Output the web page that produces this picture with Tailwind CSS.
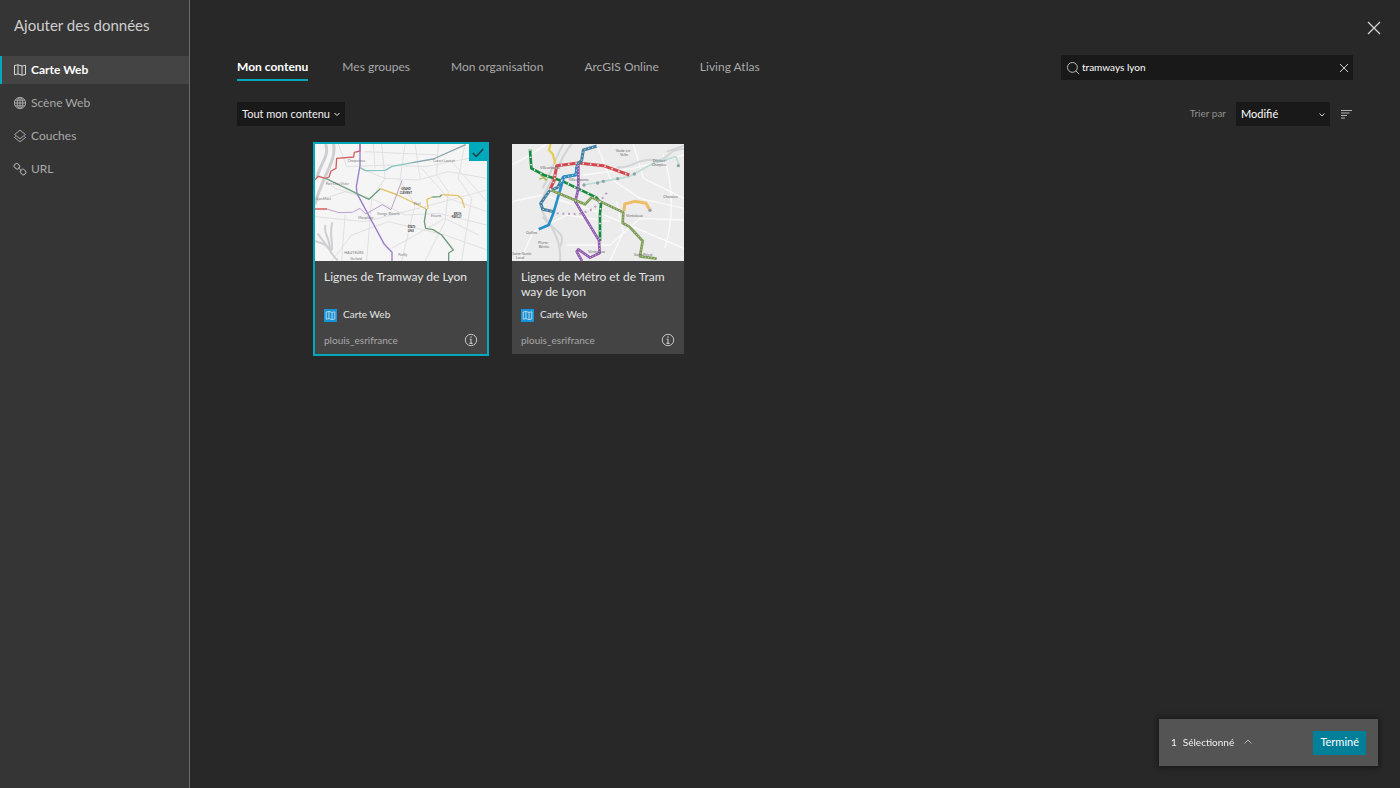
<!DOCTYPE html>
<html lang="fr">
  <head>
    <meta charset="UTF-8" />
    <meta name="viewport" content="width=device-width, initial-scale=1.0" />
    <title>Ajouter des données</title>
    <script src="https://cdn.jsdelivr.net/npm/@tailwindcss/browser@4"></script>
  </head>
  <body class="flex min-h-screen bg-[#282828] font-['Lato','Open_Sans',sans-serif] text-xs text-[#a9a9a9]">
    <!-- icons used more than once -->
    <svg class="hidden">
      <symbol id="icon-map" viewBox="0 0 14 14">
        <path d="M1.5 2.5C3 2.5 4 1.8 5 1.8S7.5 3 9 3 11.500 2.300 12.500 2.300L12.500 11.500C11.500 11.500 10.500 12.200 9 12.200S6.500 11 5 11 3 11.700 1.500 11.700ZM5 1.800V11M9 3V12.200" fill="none" stroke="currentColor" stroke-linejoin="round" />
      </symbol>
      <symbol id="icon-info" viewBox="0 0 14 14">
        <circle cx="7" cy="7" r="5.7" fill="none" stroke="currentColor" />
        <path d="M7 3.3v1.4M5.7 6.2H7v4M5.5 10.4h3" fill="none" stroke="currentColor" stroke-width="1.1" />
      </symbol>
    </svg>

    <!-- SIDEBAR -->
    <aside class="w-[190px] shrink-0 border-r border-[#6a6a6a] bg-[#353535]">
      <h1 class="px-3.5 pt-3.5 pb-5 text-[15px] leading-[22px] text-[#cfcfcf]">Ajouter des données</h1>
      <nav class="flex flex-col gap-[5px] text-xs">
        <a href="#carte" class="flex h-7 items-center gap-1 border-l-2 border-[#00a9bb] bg-[#444444] pl-[11px] font-bold text-white">
          <svg class="size-[14px] text-[#d8d8d8]"><use href="#icon-map" /></svg>
          Carte Web
        </a>
        <a href="#scene" class="flex h-7 items-center gap-1 pl-[13px]">
          <svg class="size-[14px]" viewBox="0 0 14 14" fill="none" stroke="currentColor">
            <circle cx="7" cy="7" r="5.6" />
            <ellipse cx="7" cy="7" rx="2.8" ry="5.6" />
            <path d="M7 1.4v11.2M1.4 7h11.2M2.2 4.2h9.6M2.2 9.8h9.6" />
          </svg>
          Scène Web
        </a>
        <a href="#couches" class="flex h-7 items-center gap-1 pl-[13px]">
          <svg class="size-[14px]" viewBox="0 0 14 14" fill="none" stroke="currentColor" stroke-linejoin="round">
            <path d="M7 1.2 12.4 5.5 7 9.8 1.600 5.500ZM2.600 7.400 1.400 8.400 7 12.800 12.600 8.400 11.400 7.400" />
          </svg>
          Couches
        </a>
        <a href="#url" class="flex h-7 items-center gap-1 pl-[13px]">
          <svg class="size-[14px]" viewBox="0 0 14 14" fill="none" stroke="currentColor">
            <rect x="1.2" y="2" width="5.4" height="4.6" rx="1.6" transform="rotate(45 3.9 4.3)" />
            <rect x="7.4" y="7.6" width="5.4" height="4.6" rx="1.6" transform="rotate(45 10.1 9.9)" />
            <path d="M5.3 5.6 8.6 8.8" />
          </svg>
          URL
        </a>
      </nav>
    </aside>

    <!-- MAIN -->
    <main class="relative flex-1 px-[47px] pt-[55px]">
      <button aria-label="Fermer" class="absolute top-5 right-[18px] text-[#d8d8d8]">
        <svg class="size-4" viewBox="0 0 16 16" fill="none" stroke="currentColor" stroke-width="1.2">
          <path d="M2 2 14 14M14 2 2 14" />
        </svg>
      </button>

      <div class="flex items-start justify-between">
        <nav class="flex gap-[41px] text-xs leading-6">
          <a href="#contenu" class="-mr-[7px] border-b-2 border-[#00a9bb] font-bold text-white">Mon contenu</a>
          <a href="#groupes">Mes groupes</a>
          <a href="#organisation">Mon organisation</a>
          <a href="#online">ArcGIS Online</a>
          <a href="#atlas">Living Atlas</a>
        </nav>
        <div class="flex h-[25px] w-[292px] items-center gap-0.5 bg-[#191919] px-[5px]">
          <svg class="size-[14px] shrink-0" viewBox="0 0 14 14" fill="none" stroke="#bdbdbd">
            <circle cx="6.4" cy="6.4" r="4.9" />
            <path d="M9.9 9.9 13.2 13.2" />
          </svg>
          <input type="text" aria-label="Rechercher" value="tramways lyon" class="min-w-0 flex-1 text-[10px] text-white outline-none" />
          <button aria-label="Effacer" class="text-[#d0d0d0]">
            <svg class="size-2" viewBox="0 0 8 8" fill="none" stroke="currentColor"><path d="M0 0 8 8M8 0 0 8" /></svg>
          </button>
        </div>
      </div>

      <div class="mt-[21px] flex items-center justify-between">
        <button class="flex h-6 items-center gap-1 bg-[#191919] px-[5px] text-[11px] text-[#f0f0f0]">
          Tout mon contenu
          <svg class="size-1.5" viewBox="0 0 6 6" fill="none" stroke="currentColor"><path d="M.5 2 3 4.500 5.500 2" /></svg>
        </button>
        <div class="flex items-center gap-2.5">
          <label for="tri" class="text-[10px] text-[#8f8f8f]">Trier par</label>
          <div class="relative">
            <select id="tri" class="h-6 w-[94px] appearance-none bg-[#191919] px-[5px] text-[11px] text-white">
              <option>Modifié</option>
            </select>
            <svg class="pointer-events-none absolute top-2.5 right-[5px] size-1.5" viewBox="0 0 6 6" fill="none" stroke="#d0d0d0"><path d="M.5 1.5 3 4 5.5 1.5" /></svg>
          </div>
          <button aria-label="Ordre de tri" class="text-[#b5b5b5]">
            <svg class="h-3 w-[13px]" viewBox="0 0 13 12" fill="none" stroke="currentColor"><path d="M1 2.5H12M1 5H9.5M1 7.5H7M1 10H5" /></svg>
          </button>
        </div>
      </div>

      <!-- RESULTS -->
      <div class="mt-[18px] grid grid-cols-[repeat(auto-fill,172px)] justify-center gap-[25px]">
        <article class="relative flex h-[210px] flex-col bg-[#444444] outline-2 outline-[#00a9bb]">
          <svg class="h-[117px] w-full bg-[#f5f5f6]" viewBox="30 27 516 351" preserveAspectRatio="none" fill="none" stroke-linejoin="round">
            <g stroke="#e1e1e3" stroke-width="3">
              <path d="M100 27 125 95 250 90 360 95 546 60M165 100 240 130 340 135 430 110 546 130M30 200 120 170 200 190 300 240 400 235 546 270" />
              <path d="M230 27 240 130 200 190 185 378M300 27 285 135 330 210 290 378M400 27 395 120 430 170 420 260 360 378M480 27 460 130 500 190 470 378" />
              <path d="M30 245 180 260 360 215 546 165M80 378 140 300 250 260 420 300 546 345M120 240 110 378M30 110 90 160 160 180M350 100 430 190 546 230M260 340 420 250 520 300M180 50 400 60M205 27 210 100M330 27 345 130M440 80 546 200" />
            </g>
            <g stroke="#cfcfd1" stroke-width="9">
              <path d="M86 27C92 70 70 100 52 145S30 200 30 210" />
              <path d="M62 27C74 65 45 85 36 128" />
              <path d="M30 318 58 328C76 338 78 360 98 376M38 296 66 334M62 270C52 290 76 310 74 342M82 262C72 300 84 310 80 346" stroke-width="6" />
            </g>
            <g stroke-width="4">
              <path d="M165 27V48L148 52 146 66 95 70 93 100 78 108 72 126 62 130 40 124 30 134M30 222H66" stroke="#d45f60" />
              <path d="M165 27V92L154 155 156 176 238 328 261 352V378" stroke="#9a7cc8" />
              <path d="M165 98 182 107 240 106 262 94 322 83" stroke="#84c5bd" />
              <path d="M322 83 385 72 482 29" stroke="#88a5ac" />
              <path d="M62 130 192 193 226 161" stroke="#70a083" />
              <path d="M226 161 278 180 364 222M410 179 460 182 470 191 479 218M369 222 366 193 382 186" stroke="#e6c263" />
              <path d="M382 186 404 185 410 179M364 222 358 260 362 280 384 284 410 300 445 345 431 354V378" stroke="#6f9d7c" />
              <path d="M66 222 102 233 142 232 165 220 182 237 232 209 258 224 291 136" stroke="#bca2ca" stroke-width="3" />
            </g>
            <g fill="#777" font-size="10" font-family="Lato, sans-serif">
              <text x="128" y="82">Charpennes</text>
              <text x="384" y="81">Cusset Laurent</text>
              <text x="62" y="149">Part-Dieu Vivier</text>
              <text x="160" y="253">Monplaisir</text>
              <text x="216" y="241">Grange Blanche</text>
              <text x="326" y="211">Pinel</text>
              <text x="378" y="246">Essarts</text>
              <text x="32" y="196">Jean Macé</text>
              <text x="118" y="357" font-size="11">HAUTEURS</text>
              <text x="136" y="376">Gerland</text>
              <text x="280" y="364">Parilly</text>
            </g>
            <g fill="#444" font-size="8" font-weight="bold" font-family="Lato, sans-serif">
              <text x="289" y="166">GRAND</text>
              <text x="284" y="176">CLÉMENT</text>
              <text x="446" y="241">BRON</text>
              <text x="440" y="250">PARILLY</text>
              <text x="308" y="280">ÉTATS</text>
              <text x="308" y="290">UNIS</text>
            </g>
          </svg>
          <span class="absolute top-0 right-0 flex h-[17px] w-[18px] items-center justify-center bg-[#00a9bb] text-[#1d3f44]">
            <svg class="h-2.5 w-3" viewBox="0 0 12 10" fill="none" stroke="currentColor" stroke-width="1.5"><path d="M.8 5 4.2 8.5 11.2 1" /></svg>
          </span>
          <div class="flex flex-1 flex-col px-[9px] pt-2 pb-1.5">
            <h2 class="h-9 text-xs leading-[15px] text-[#e4e4e4]">Lignes de Tramway de Lyon</h2>
            <p class="mt-0.5 flex h-4 items-center gap-1.5 text-[10px] text-[#e4e4e4]">
              <span class="bg-[#1593d8] p-px"><svg class="size-[11px]"><use href="#icon-map" /></svg></span>
              Carte Web
            </p>
            <div class="mt-auto flex items-center justify-between text-[10px] leading-4">
              plouis_esrifrance
              <button aria-label="Détails" class="text-[#c4c4c4]"><svg class="size-[14px]"><use href="#icon-info" /></svg></button>
            </div>
          </div>
        </article>

        <article class="flex h-[210px] flex-col bg-[#444444]">
          <svg class="h-[117px] w-full bg-[#ececed]" viewBox="36 27 516 351" preserveAspectRatio="none" fill="none" stroke-linejoin="round">
            <g stroke="#fafafa" stroke-width="4">
              <path d="M36 90 90 60 140 27M36 200 130 180 290 230 552 340M60 378 100 290 200 240 330 260M290 27 330 130 420 190 552 220M400 27 430 130 552 190M200 330H330L420 250 552 255M250 120 400 100 552 60M495 340C520 250 520 150 490 60M330 378 370 290 350 200" />
            </g>
            <g stroke="#d2d4d6" stroke-width="6">
              <path d="M215 27C185 60 170 110 150 145S112 210 135 245 185 320 180 378" />
              <path d="M190 27C165 70 160 100 128 160" />
              <path d="M128 245C160 290 205 290 178 340" />
              <path d="M350 97C400 100 410 70 460 75S500 40 552 42M500 50 552 32" />
            </g>
            <g stroke-width="5">
              <path d="M252 150 310 139 387 125 460 85 528 65 538 92" stroke="#bcddd6" />
              <path d="M152 27 147 45 158 57 166 86" stroke="#e8cc4e" stroke-width="7" />
              <path d="M118 132 142 122 163 133M122 120 140 136" stroke="#a7b64d" />
              <path d="M90 43 94 100 132 120 184 137 290 188 303 207 300 235V318" stroke="#188a3e" stroke-width="8" />
              <path d="M150 164 162 138 170 92 235 84 310 92 388 120" stroke="#d24a50" stroke-width="9" />
              <path d="M291 33 250 45 245 76 232 88 228 119 190 127 173 157 148 168 122 205 128 223 162 230" stroke="#427fa0" stroke-width="9" />
              <path d="M230 95 228 120 192 125 160 235 146 270 116 283" stroke="#278fc8" stroke-width="8" />
              <path d="M235 90V160L226 200 297 316 299 354 270 368 235 343 230 350 246 378" stroke="#8e58ad" stroke-width="8" />
              <path d="M150 164 255 208 275 187 370 232 368 264 388 275 428 318 420 364 470 371" stroke="#7d9b55" stroke-width="8" />
              <path d="M372 228 374 207 405 199 438 205 450 226" stroke="#edbd67" stroke-width="9" />
              <path d="M170 235 236 238 280 222 322 172" stroke="#bd9dc8" stroke-width="6" stroke-dasharray="6 11" />
            </g>
            <!-- stops -->
            <g stroke="#f4f4f4" stroke-width="3" stroke-dasharray="4 18">
              <path d="M90 43 94 100 132 120 184 137 290 188 303 207 300 235V318" stroke-width="5" />
              <path d="M150 164 162 138 170 92 235 84 310 92 388 120" stroke-width="5" />
              <path d="M291 33 250 45 245 76 232 88 228 119 190 127 173 157 148 168 122 205 128 223 162 230" stroke-dasharray="3 9" />
              <path d="M235 90V160L226 200 297 316 299 354 270 368 235 343 230 350 246 378" stroke-width="2" stroke-dasharray="3 6" />
              <path d="M150 164 255 208 275 187 370 232 368 264 388 275 428 318 420 364 470 371" stroke-width="2" stroke-dasharray="3 6" />
            </g>
            <g fill="#94a4a4">
              <circle cx="252" cy="150" r="5" />
              <circle cx="293" cy="144" r="5" />
              <circle cx="310" cy="139" r="5" />
              <circle cx="353" cy="131" r="5" />
              <circle cx="403" cy="117" r="5" />
              <circle cx="535" cy="92" r="5" />
              <circle cx="450" cy="226" r="5" />
            </g>
            <g fill="#666" font-size="11" font-family="Lato, sans-serif">
              <text x="347" y="51">Vaulx-en-</text>
              <text x="360" y="63">Velin</text>
              <text x="458" y="82">Décines-</text>
              <text x="455" y="94">Charpieu</text>
              <text x="490" y="188">Chassieu</text>
              <text x="120" y="102">Villeurbanne</text>
              <text x="206" y="137">Villeurbanne</text>
              <text x="378" y="246">Vénissieux</text>
              <text x="78" y="296">Oullins</text>
              <text x="115" y="328">Pierre-</text>
              <text x="117" y="340">Bénite</text>
              <text x="37" y="361">Saint-Genis-</text>
              <text x="48" y="373">Laval</text>
              <text x="264" y="353">Vénissieux</text>
              <text x="402" y="362">Saint-Priest</text>
            </g>
          </svg>
          <div class="flex flex-1 flex-col px-[9px] pt-2 pb-1.5">
            <h2 class="h-9 text-xs leading-[15px] text-[#e4e4e4]">Lignes de Métro et de Tram<br />way de Lyon</h2>
            <p class="mt-0.5 flex h-4 items-center gap-1.5 text-[10px] text-[#e4e4e4]">
              <span class="bg-[#1593d8] p-px"><svg class="size-[11px]"><use href="#icon-map" /></svg></span>
              Carte Web
            </p>
            <div class="mt-auto flex items-center justify-between text-[10px] leading-4">
              plouis_esrifrance
              <button aria-label="Détails" class="text-[#c4c4c4]"><svg class="size-[14px]"><use href="#icon-info" /></svg></button>
            </div>
          </div>
        </article>
      </div>
    </main>

    <!-- SELECTION BAR -->
    <div class="fixed right-[22px] bottom-[22px] flex h-[47px] w-[219px] items-center justify-between bg-[#545454] px-3 text-[10px] text-[#f0f0f0] shadow-[0_0_6px_2px_rgba(0,0,0,0.35)]">
      <button class="flex items-center gap-1.5">
        <span>1</span>
        <span>Sélectionné</span>
        <svg class="ml-1 size-2" viewBox="0 0 8 8" fill="none" stroke="#b5b5b5"><path d="M.5 5.5 4 2 7.5 5.5" /></svg>
      </button>
      <button class="h-6 bg-[#007f99] px-[7px] text-[11px] text-white">Terminé</button>
    </div>
  </body>
</html>
